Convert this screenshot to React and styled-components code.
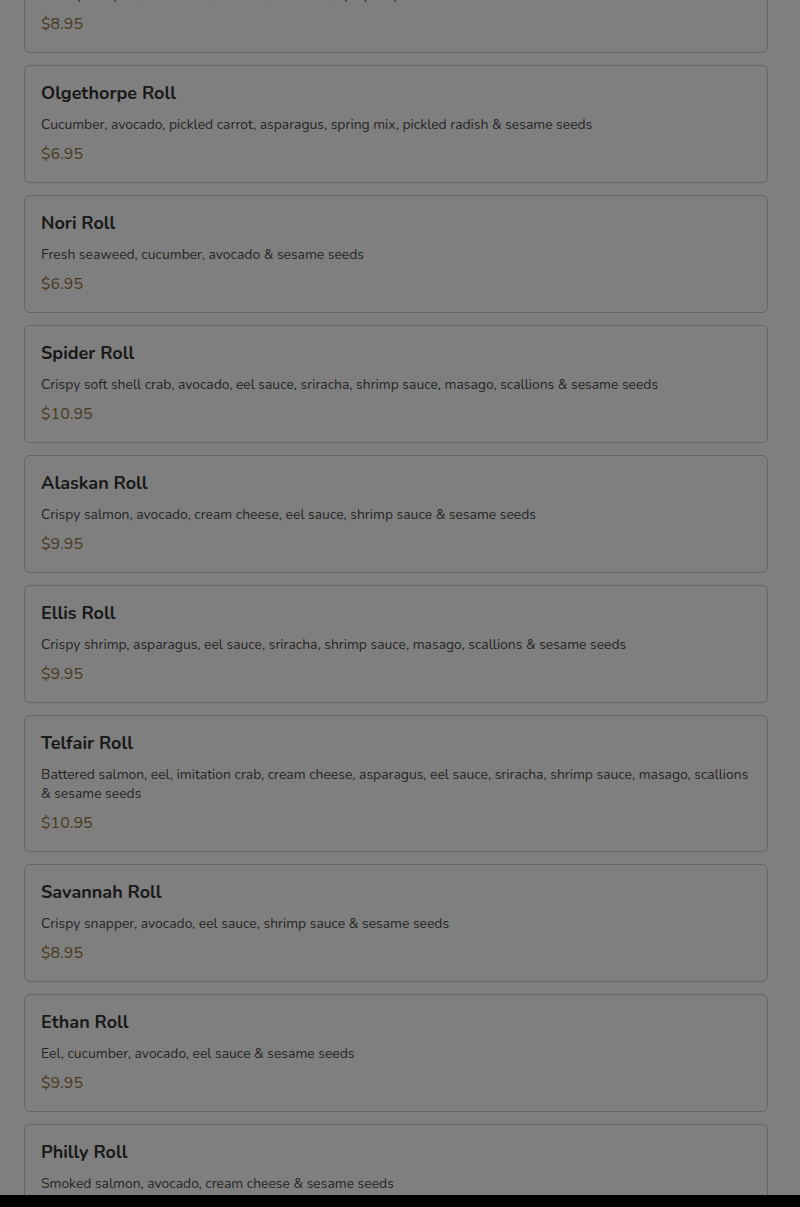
import React from 'react'
import styled, { createGlobalStyle } from 'styled-components'

const GlobalStyle = createGlobalStyle`
  html, body {
    margin: 0;
    padding: 0;
    background: #ffffff;
    font-family: "Nunito", "Lato", "Noto Sans", sans-serif;
    overflow: hidden;
  }
`

const Page = styled.div`
  height: 1207px;
  overflow: hidden;
  position: relative;
`

const List = styled.div`
  display: flex;
  flex-direction: column;
  gap: 12px;
  padding: 0 32px 0 24px;
  margin-top: -65px;
`

const Card = styled.div`
  border: 1px solid #cccccc;
  border-radius: 6px;
  background: #ffffff;
  padding: 16px 16px 17px;
  display: flex;
  flex-direction: column;
`

const Title = styled.h3`
  margin: 0;
  font-size: 18px;
  line-height: 22px;
  font-weight: 700;
  color: #333333;
`

const Desc = styled.p`
  margin: 11px 0 0;
  font-size: 13.88px;
  line-height: 19px;
  color: #4a4a4a;
`

const Price = styled.div`
  margin-top: 9px;
  font-size: 16px;
  line-height: 22px;
  color: #94733f;
`

const Overlay = styled.div`
  position: fixed;
  inset: 0;
  background: rgba(0, 0, 0, 0.5);
`

const BottomBar = styled.div`
  position: fixed;
  left: 0;
  right: 0;
  bottom: 0;
  height: 12px;
  background: #000000;
`

const rolls = [
  { name: 'Dragon Roll', desc: 'Shrimp tempura, cucumber, avocado, eel sauce, spicy mayo & sesame seeds', price: '$8.95' },
  { name: 'Olgethorpe Roll', desc: 'Cucumber, avocado, pickled carrot, asparagus, spring mix, pickled radish & sesame seeds', price: '$6.95' },
  { name: 'Nori Roll', desc: 'Fresh seaweed, cucumber, avocado & sesame seeds', price: '$6.95' },
  { name: 'Spider Roll', desc: 'Crispy soft shell crab, avocado, eel sauce, sriracha, shrimp sauce, masago, scallions & sesame seeds', price: '$10.95' },
  { name: 'Alaskan Roll', desc: 'Crispy salmon, avocado, cream cheese, eel sauce, shrimp sauce & sesame seeds', price: '$9.95' },
  { name: 'Ellis Roll', desc: 'Crispy shrimp, asparagus, eel sauce, sriracha, shrimp sauce, masago, scallions & sesame seeds', price: '$9.95' },
  { name: 'Telfair Roll', desc: 'Battered salmon, eel, imitation crab, cream cheese, asparagus, eel sauce, sriracha, shrimp sauce, masago, scallions & sesame seeds', price: '$10.95' },
  { name: 'Savannah Roll', desc: 'Crispy snapper, avocado, eel sauce, shrimp sauce & sesame seeds', price: '$8.95' },
  { name: 'Ethan Roll', desc: 'Eel, cucumber, avocado, eel sauce & sesame seeds', price: '$9.95' },
  { name: 'Philly Roll', desc: 'Smoked salmon, avocado, cream cheese & sesame seeds', price: '$8.95' },
]

export default function App() {
  return (
    <Page>
      <GlobalStyle />
      <List>
        {rolls.map((r) => (
          <Card key={r.name}>
            <Title>{r.name}</Title>
            <Desc>{r.desc}</Desc>
            <Price>{r.price}</Price>
          </Card>
        ))}
      </List>
      <Overlay />
      <BottomBar />
    </Page>
  )
}
